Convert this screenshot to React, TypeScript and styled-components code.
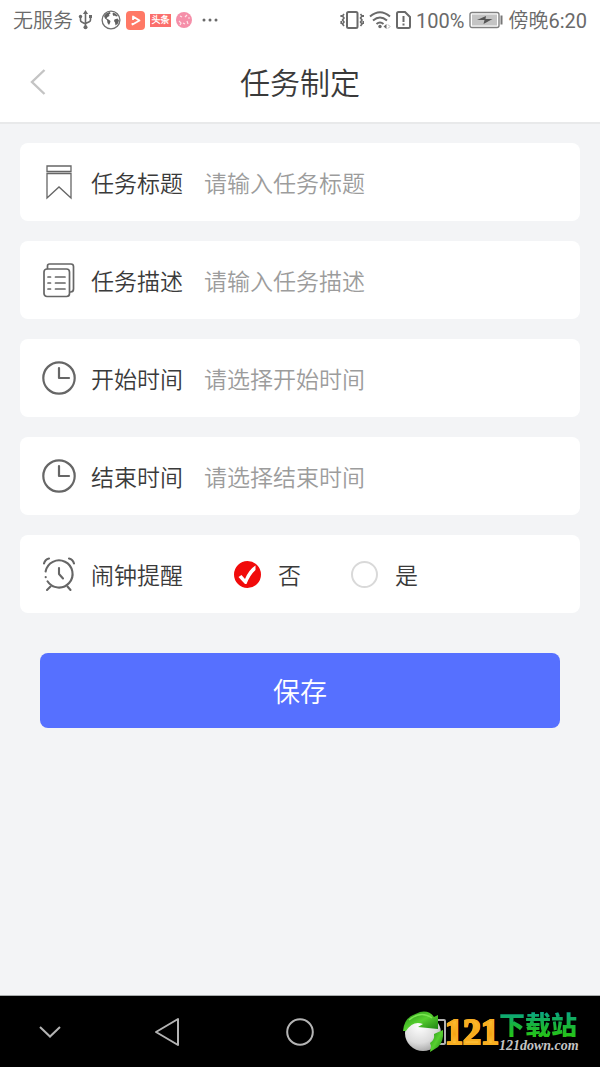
import React, { useState } from "react";
import styled, { createGlobalStyle } from "styled-components";

const GlobalStyle = createGlobalStyle`
  *, *::before, *::after { box-sizing: border-box; }
  body {
    margin: 0;
    background: #f3f4f6;
    font-family: Roboto, "Noto Sans CJK SC DemiLight", "Noto Sans CJK SC", sans-serif;
    color: #3a3a3a;
  }
  input, button { font-family: inherit; }
`;

const Screen = styled.div`
  min-height: 100vh;
  display: flex;
  flex-direction: column;
`;

const StatusBar = styled.div`
  display: flex;
  justify-content: space-between;
  align-items: center;
  height: 40px;
  padding: 0 13px;
  background: #fff;
  color: #6a6a6a;
  font-size: 20px;
  font-weight: 400;
  line-height: 40px;
  white-space: nowrap;
`;

const StatusText = styled.span`
  padding-top: 2px;
`;

const StatusGroup = styled.div`
  display: flex;
  align-items: center;
  gap: 5px;
`;

const AppIcons = styled.div`
  display: flex;
  align-items: center;
  gap: 5px;
  margin-left: 3px;
`;

const NewsBadge = styled.span`
  width: 21px;
  height: 13px;
  background: #fb6f6c;
  color: #fff;
  font-size: 9px;
  font-weight: 700;
  line-height: 13px;
  text-align: center;
`;

const Header = styled.header`
  display: grid;
  grid-template-columns: 76px 1fr 76px;
  align-items: center;
  height: 84px;
  padding-top: 2px;
  background: #fff;
  border-bottom: 2px solid #e8e9ea;
`;

const BackButton = styled.button`
  display: flex;
  justify-content: center;
  padding: 0;
  border: 0;
  background: none;
`;

const Title = styled.h1`
  margin: 0;
  padding-top: 4px;
  font-size: 30px;
  line-height: 40px;
  font-weight: 400;
  text-align: center;
`;

const Form = styled.form`
  flex: 1;
  display: flex;
  flex-direction: column;
  gap: 20px;
  padding: 19px 20px;
`;

const Row = styled.div`
  display: flex;
  align-items: center;
  min-height: 78px;
  padding: 0 22px;
  border-radius: 8px;
  background: #fff;
  font-size: 23px;
  font-weight: 400;
  line-height: 34px;
`;

const RowIcon = styled.svg`
  flex: none;
  width: 34px;
  height: 38px;
  margin-right: 15px;
  fill: none;
  stroke: #666;
  stroke-linecap: round;
  stroke-linejoin: round;
`;

const FieldLabel = styled.label`
  flex: none;
  padding-top: 5px;
  margin-right: 21px;
`;

const TextInput = styled.input`
  flex: 1;
  min-width: 0;
  padding: 5px 0 0;
  border: 0;
  outline: 0;
  background: none;
  color: #3a3a3a;
  font-size: 23px;
  font-weight: 400;
  line-height: 34px;
  &::placeholder { color: #9c9c9c; opacity: 1; }
`;

const Options = styled.div`
  display: flex;
  gap: 50px;
  padding-left: 30px;
`;

const Option = styled.label`
  display: flex;
  align-items: center;
  gap: 17px;
`;

const OptionText = styled.span`
  padding-top: 5px;
`;

const RadioBox = styled.span`
  display: grid;
  & > * { grid-area: 1 / 1; }
`;

const Radio = styled.input`
  appearance: none;
  width: 27px;
  height: 27px;
  margin: 0;
  border: 2px solid #d9d9d9;
  border-radius: 50%;
  background: #fff;
  &:checked { border-color: #f10b0b; background: #f10b0b; }
`;

const Tick = styled.svg`
  width: 27px;
  height: 27px;
  pointer-events: none;
`;

const SaveButton = styled.button`
  height: 75px;
  margin: 20px 20px 0;
  padding: 4px 0 0;
  border: 0;
  border-radius: 8px;
  background: #5670ff;
  color: #fff;
  font-size: 27px;
  font-weight: 300;
  line-height: 40px;
`;

const NavBar = styled.nav`
  position: relative;
  display: grid;
  grid-template-columns: 100px 1fr 1fr 1fr 100px;
  align-items: center;
  height: 72px;
  border-top: 1px solid #a8acac;
  background: #000;
`;

const NavButton = styled.button`
  display: flex;
  justify-content: center;
  padding: 0;
  border: 0;
  background: none;
`;

const Watermark = styled.div`
  position: absolute;
  right: 22px;
  top: 14px;
  display: flex;
  align-items: center;
  height: 44px;
`;

const WatermarkNumber = styled.span`
  width: 54px;
  font-family: "Liberation Serif", serif;
  font-size: 36px;
  font-weight: 700;
  line-height: 44px;
  text-align: center;
  background: linear-gradient(#ffc43c 15%, #f6a412 55%, #ffcb48 85%);
  background-clip: text;
  color: transparent;
  -webkit-text-stroke: 2px #f8ae20;
`;

const WatermarkText = styled.span`
  display: flex;
  flex-direction: column;
  gap: 2px;
  width: 79px;
`;

const WatermarkName = styled.strong`
  font-family: "Noto Sans CJK SC", sans-serif;
  font-size: 26px;
  font-weight: 900;
  line-height: 26px;
  white-space: nowrap;
  background: linear-gradient(#0aa58a, #18b43b 55%, #27c516);
  background-clip: text;
  color: transparent;
`;

const WatermarkSite = styled.em`
  font-family: "Liberation Serif", serif;
  font-size: 14px;
  font-weight: 700;
  line-height: 14px;
  color: #c4c4c4;
`;

const UsbIcon = () => (
  <svg width="15" height="20" viewBox="0 0 15 20" fill="none" stroke="#6a6a6a" strokeWidth="1.6">
    <path d="M7.5 3v13M2.5 7v3.2q0 1.2 1.2 1.8l3.8 2M12.500 7v3q0 1.2-1.200 1.700l-3.800 1.800" />
    <path d="M7.500 0l2.600 4H4.900z" fill="#6a6a6a" stroke="none" />
    <circle cx="7.500" cy="17.300" r="2" fill="#6a6a6a" stroke="none" />
    <circle cx="2.500" cy="6.500" r="1.700" fill="#6a6a6a" stroke="none" />
    <path d="M11 5h3v3h-3z" fill="#6a6a6a" stroke="none" />
  </svg>
);

const GlobeIcon = () => (
  <svg width="20" height="20" viewBox="0 0 20 20">
    <circle cx="10" cy="10" r="8.900" fill="none" stroke="#707070" strokeWidth="1.300" />
    <path d="M3 6q2-3.500 6-4l.500 1.500-1.500 1 .500 1.500-2 1-1 1.500 2 1 2 1.500-.500 2-1 2-1.500-2-.500-3-2-1.500z" fill="#606060" />
    <path d="M12 2.500q3 .500 5 3.500l-2 .500-1-1-1.500.500-1-2zM13.500 9.500l3-1 1.500 2-1 3-2.500 2-.500-3-1-1.500z" fill="#606060" />
  </svg>
);

const PlayAppIcon = () => (
  <svg width="19" height="19" viewBox="0 0 19 19">
    <rect width="19" height="19" rx="4" fill="#ff7966" />
    <path d="M7 9V5.500L13.500 9.500 6.500 13.500V12" fill="none" stroke="#fff" strokeWidth="1.800" strokeLinejoin="round" />
  </svg>
);

const PinkAppIcon = () => (
  <svg width="16" height="16" viewBox="0 0 16 16">
    <circle cx="8" cy="8" r="8" fill="#f58fa9" />
    <path d="M4 4l2 1M11 3l-2 2M3 9l2 2-1 2M7 11l2 1M11 9l1 3M12 6h2" fill="none" stroke="#ffe3e9" strokeWidth="1.200" />
  </svg>
);

const MoreIcon = () => (
  <svg width="21" height="4" viewBox="-5 0 21 4" fill="#6a6a6a">
    <circle cx="2" cy="2" r="1.500" /><circle cx="8" cy="2" r="1.500" /><circle cx="14" cy="2" r="1.500" />
  </svg>
);

const VibrateIcon = () => (
  <svg width="24" height="20" viewBox="0 0 24 20" fill="none" stroke="#6a6a6a">
    <rect x="7" y="2" width="10.500" height="16" rx="1.500" strokeWidth="2" />
    <path d="M4 4L2.500 6 4 8 2.500 10 4 12 2.500 14 4 16M1.200 5v2M1.200 11v3M20.500 4l1.500 2-1.500 2 1.500 2-1.500 2 1.500 2-1.500 2M23.200 5v2M23.200 11v3" strokeWidth="1.600" />
  </svg>
);

const WifiIcon = () => (
  <svg width="22" height="20" viewBox="0 0 22 20" fill="none" stroke="#6a6a6a" strokeWidth="2">
    <path d="M1 6.500Q11-2 21 6.500M4 10.500q7-6 14 0M7.500 14q3.500-3 7 0" />
    <circle cx="11" cy="16.500" r="1.700" fill="#6a6a6a" stroke="none" />
    <path d="M14.500 16.500l3-2.500v5z" fill="#6a6a6a" stroke="none" />
    <path d="M19 14.500l2 2-2 2" stroke="#b0b0b0" strokeWidth="1" />
  </svg>
);

const SimIcon = () => (
  <svg width="15" height="20" viewBox="0 0 15 20" fill="none" stroke="#6a6a6a" strokeWidth="2">
    <path d="M2.500 2h6.500l5 5v9.500q0 1.500-1.500 1.500h-10Q1 18 1 16.500v-13Q1 2 2.500 2zM7.500 6v6M7.500 13.500v2" />
  </svg>
);

const BatteryIcon = () => (
  <svg width="34" height="18" viewBox="0 0 34 18">
    <rect x="1" y="1.500" width="29" height="15" rx="2" fill="#fff" stroke="#808080" strokeWidth="1.400" />
    <rect x="3" y="3.500" width="25" height="11" fill="#c4c4c4" />
    <path d="M8 9l9-4-.500 3h7l-9 5 1-4z" fill="#555" />
    <path d="M31.500 4.500h2v9h-2z" fill="#777" />
  </svg>
);

const BookmarkIcon = () => (
  <RowIcon viewBox="0 0 34 38" strokeWidth="1.300">
    <path d="M5 3h24v5.500H5zM5 10.500h24V35L17 24 5 35z" strokeLinejoin="miter" />
  </RowIcon>
);

const ListIcon = () => (
  <RowIcon viewBox="0 0 34 38" strokeWidth="1.700">
    <path d="M5.500 7.500V5q0-2 2-2H29q2.500 0 2.500 2.500V28q0 3-3 3" />
    <rect x="2" y="8" width="25.500" height="27.500" rx="3" />
    <path d="M6 16h2.500M6 22h2.500M6 28h2.500M13.500 16H23M13.500 22H23M13.500 28H23" />
  </RowIcon>
);

const ClockIcon = () => (
  <RowIcon viewBox="0 0 34 38" strokeWidth="2.200">
    <circle cx="17" cy="19" r="15.700" />
    <path d="M17 9v10h10" />
  </RowIcon>
);

const AlarmIcon = () => (
  <RowIcon viewBox="0 0 34 38" strokeWidth="2.100">
    <path d="M3.600 16.500A13.600 13.600 0 1 1 5.500 26.300M3.700 22v.200" />
    <path d="M17 13v6l4 4.500M2 8.500q1-4 5-5M32 8.500q-1-4-5-5M8.500 31.500l-3.500 3.500M25.500 31.500l3 3.500" />
  </RowIcon>
);

const LogoBall = () => (
  <svg width="42" height="42" viewBox="0 0 42 42">
    <defs>
      <radialGradient id="ball" cx="0.4" cy="0.3" r="0.8">
        <stop offset="0" stopColor="#fff" />
        <stop offset="0.600" stopColor="#dcdcdc" />
        <stop offset="1" stopColor="#9a9a9a" />
      </radialGradient>
      <linearGradient id="leaf" x1="0" y1="0" x2="1" y2="1">
        <stop offset="0" stopColor="#1f8a14" />
        <stop offset="0.500" stopColor="#57d02f" />
        <stop offset="1" stopColor="#16790e" />
      </linearGradient>
    </defs>
    <circle cx="20" cy="22" r="18" fill="url(#ball)" />
    <path d="M0 20Q1 8 10 4l7-3q9-2 14 5l4-2v14l-20-2 5-3Q10 9 3 20z" fill="url(#leaf)" />
    <path d="M31 23l9-4q1 12-5 17l-8 5 1-6-1-3q5-3 4-9z" fill="url(#leaf)" />
    <path d="M6 9Q18-1 29 7" fill="none" stroke="#7be552" strokeWidth="1.500" />
  </svg>
);

const textFields = [
  { id: "title", label: "任务标题", placeholder: "请输入任务标题", Icon: BookmarkIcon, pick: false },
  { id: "description", label: "任务描述", placeholder: "请输入任务描述", Icon: ListIcon, pick: false },
  { id: "start", label: "开始时间", placeholder: "请选择开始时间", Icon: ClockIcon, pick: true },
  { id: "end", label: "结束时间", placeholder: "请选择结束时间", Icon: ClockIcon, pick: true },
];

const reminderOptions = ["否", "是"];

export default function App() {
  const [reminder, setReminder] = useState("否");

  return (
    <Screen>
      <GlobalStyle />
      <StatusBar>
        <StatusGroup>
          <StatusText>无服务</StatusText>
          <UsbIcon />
          <AppIcons>
            <GlobeIcon />
            <PlayAppIcon />
            <NewsBadge>头条</NewsBadge>
            <PinkAppIcon />
            <MoreIcon />
          </AppIcons>
        </StatusGroup>
        <StatusGroup>
          <VibrateIcon />
          <WifiIcon />
          <SimIcon />
          <StatusText>100%</StatusText>
          <BatteryIcon />
          <StatusText>傍晚6:20</StatusText>
        </StatusGroup>
      </StatusBar>
      <Header>
        <BackButton type="button" aria-label="返回">
          <svg width="16" height="26" viewBox="0 0 16 26" fill="none" stroke="#c4c4c4" strokeWidth="2.400">
            <path d="M14.500 1L2 13l12.500 12" />
          </svg>
        </BackButton>
        <Title>任务制定</Title>
      </Header>
      <Form onSubmit={(e) => e.preventDefault()}>
        {textFields.map(({ id, label, placeholder, Icon, pick }) => (
          <Row key={id}>
            <Icon />
            <FieldLabel htmlFor={id}>{label}</FieldLabel>
            <TextInput id={id} type="text" placeholder={placeholder} readOnly={pick} />
          </Row>
        ))}
        <Row role="radiogroup" aria-labelledby="reminder-label">
          <AlarmIcon />
          <FieldLabel as="span" id="reminder-label">闹钟提醒</FieldLabel>
          <Options>
            {reminderOptions.map((option) => (
              <Option key={option}>
                <RadioBox>
                  <Radio
                    type="radio"
                    name="reminder"
                    value={option}
                    checked={reminder === option}
                    onChange={() => setReminder(option)}
                  />
                  {reminder === option && (
                    <Tick viewBox="0 0 27 27">
                      <path d="M4.500 16l3-2 3.500 4Q15 8.500 21.500 4.500v4.500Q16 14 12.500 23h-1.500Q8 20 4.500 16z" fill="#fff" />
                    </Tick>
                  )}
                </RadioBox>
                <OptionText>{option}</OptionText>
              </Option>
            ))}
          </Options>
        </Row>
        <SaveButton type="submit">保存</SaveButton>
      </Form>
      <NavBar>
        <NavButton type="button" aria-label="收起">
          <svg width="24" height="14" viewBox="0 0 24 14" fill="none" stroke="#b4b4b4" strokeWidth="2">
            <path d="M2 2l10 9.500L22 2" />
          </svg>
        </NavButton>
        <NavButton type="button" aria-label="后退">
          <svg width="26" height="30" viewBox="0 0 26 30" fill="none" stroke="#b4b4b4" strokeWidth="2" strokeLinejoin="round">
            <path d="M24 2v26L2 15z" />
          </svg>
        </NavButton>
        <NavButton type="button" aria-label="主页">
          <svg width="28" height="28" viewBox="0 0 28 28" fill="none" stroke="#b4b4b4" strokeWidth="2">
            <circle cx="14" cy="14" r="12.800" />
          </svg>
        </NavButton>
        <NavButton type="button" aria-label="最近任务">
          <svg width="26" height="26" viewBox="0 0 26 26" fill="none" stroke="#b4b4b4" strokeWidth="2">
            <rect x="1" y="1" width="24" height="24" rx="1" />
          </svg>
        </NavButton>
        <Watermark>
          <LogoBall />
          <WatermarkNumber>121</WatermarkNumber>
          <WatermarkText>
            <WatermarkName>下载站</WatermarkName>
            <WatermarkSite>121down.com</WatermarkSite>
          </WatermarkText>
        </Watermark>
      </NavBar>
    </Screen>
  );
}
